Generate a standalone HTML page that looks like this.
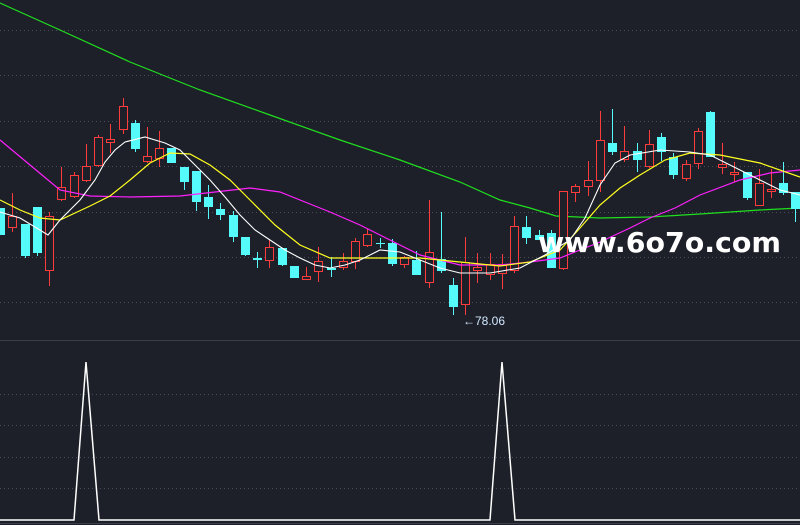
<!DOCTYPE html>
<html><head><style>
html,body{margin:0;padding:0;background:#1e2029;width:800px;height:525px;overflow:hidden}
svg{display:block}
</style></head><body>
<svg width="800" height="525" viewBox="0 0 800 525" xmlns="http://www.w3.org/2000/svg">
<rect width="800" height="525" fill="#1e2029"/>
<g stroke="#4a4e5a" stroke-width="1" stroke-dasharray="1,3">
<line x1="0" y1="30.5" x2="800" y2="30.5"/>
<line x1="0" y1="75.5" x2="800" y2="75.5"/>
<line x1="0" y1="121.5" x2="800" y2="121.5"/>
<line x1="0" y1="166.5" x2="800" y2="166.5"/>
<line x1="0" y1="212.5" x2="800" y2="212.5"/>
<line x1="0" y1="257.5" x2="800" y2="257.5"/>
<line x1="0" y1="302.5" x2="800" y2="302.5"/>
<line x1="0" y1="394.5" x2="800" y2="394.5"/>
<line x1="0" y1="425.5" x2="800" y2="425.5"/>
<line x1="0" y1="457.5" x2="800" y2="457.5"/>
<line x1="0" y1="488.5" x2="800" y2="488.5"/>
</g>
<line x1="0" y1="340.5" x2="800" y2="340.5" stroke="#3a3e4a"/>
<line x1="0" y1="523.5" x2="800" y2="523.5" stroke="#3a3e4a"/>
<polyline fill="none" stroke="#1ee01e" stroke-width="1.2" points="0,3 60,30 130,62 200,90 270,115 340,140 400,160 460,182 500,200 530,208 556,216 600,218 650,217 700,214 760,210 800,208"/>
<g stroke="#ff3c3c" stroke-width="1">
<path d="M12.5 193V232M49.5 212V286M61.5 167V201M74.5 172V198M86.5 144V182M98.5 135V167M110.5 124V153M123.5 98V134M147.5 127V163M159.5 131V167M269.5 240V268M306.5 267V280M318.5 247V282M343.5 253V270M355.5 238V269M367.5 229V247M404.5 256V268M429.5 200V288M465.5 237V315M477.5 253V283M490.5 253V280M502.5 254V289M514.5 216V273M563.5 191V270M575.5 184V202M588.5 161V196M600.5 111V192M624.5 126V162M649.5 130V168M686.5 160V181M698.5 128V169M722.5 143V174M734.5 162V182M759.5 169V206M771.5 169V198"/>
</g>
<g fill="#1e2029" stroke="#ff3c3c" stroke-width="1">
<rect x="8.5" y="216.5" width="8" height="11"/>
<rect x="45.5" y="216.5" width="8" height="54"/>
<rect x="57.5" y="187.5" width="8" height="12"/>
<rect x="70.5" y="175.5" width="8" height="21"/>
<rect x="82.5" y="166.5" width="8" height="14"/>
<rect x="94.5" y="137.5" width="8" height="28"/>
<rect x="106.5" y="139.5" width="8" height="3"/>
<rect x="119.5" y="106.5" width="8" height="23"/>
<rect x="143.5" y="156.5" width="8" height="5"/>
<rect x="155.5" y="148.5" width="8" height="10"/>
<rect x="265.5" y="247.5" width="8" height="13"/>
<rect x="302.5" y="276.5" width="8" height="3"/>
<rect x="314.5" y="261.5" width="8" height="10"/>
<rect x="339.5" y="261.5" width="8" height="6"/>
<rect x="351.5" y="241.5" width="8" height="20"/>
<rect x="363.5" y="234.5" width="8" height="11"/>
<rect x="400.5" y="257.5" width="8" height="7"/>
<rect x="425.5" y="252.5" width="8" height="30"/>
<rect x="461.5" y="262.5" width="8" height="42"/>
<rect x="473.5" y="267.5" width="8" height="3"/>
<rect x="486.5" y="264.5" width="8" height="10"/>
<rect x="498.5" y="264.5" width="8" height="9"/>
<rect x="510.5" y="226.5" width="8" height="44"/>
<rect x="559.5" y="191.5" width="8" height="77"/>
<rect x="571.5" y="186.5" width="8" height="6"/>
<rect x="584.5" y="180.5" width="8" height="6"/>
<rect x="596.5" y="140.5" width="8" height="40"/>
<rect x="620.5" y="151.5" width="8" height="8"/>
<rect x="645.5" y="144.5" width="8" height="22"/>
<rect x="682.5" y="164.5" width="8" height="14"/>
<rect x="694.5" y="131.5" width="8" height="32"/>
<rect x="718.5" y="164.5" width="8" height="3"/>
<rect x="730.5" y="172.5" width="8" height="2"/>
<rect x="755.5" y="183.5" width="8" height="22"/>
<rect x="767.5" y="189.5" width="8" height="2"/>
</g>
<g stroke="#55fafa" stroke-width="1">
<path d="M25.5 224V258M37.5 207V256M135.5 120V152M184.5 167V190M196.5 171V211M208.5 185V219M220.5 203V220M233.5 211V242M245.5 237V256M257.5 252V268M282.5 248V266M294.5 266V278M331.5 257V277M380.5 238V248M392.5 239V266M416.5 251V275M441.5 212V273M453.5 278V315M526.5 216V244M539.5 230V240M551.5 230V268M612.5 109V155M637.5 143V172M661.5 133V161M673.5 153V179M710.5 111V157M747.5 172V200M783.5 162V195M795.5 192V222"/>
</g>
<g fill="#55fafa">
<rect x="0" y="208" width="5" height="27"/>
<rect x="21" y="224" width="9" height="32"/>
<rect x="33" y="207" width="9" height="46"/>
<rect x="131" y="123" width="9" height="26"/>
<rect x="167" y="148" width="9" height="15"/>
<rect x="180" y="167" width="9" height="15"/>
<rect x="192" y="171" width="9" height="31"/>
<rect x="204" y="197" width="9" height="10"/>
<rect x="216" y="209" width="9" height="6"/>
<rect x="229" y="215" width="9" height="22"/>
<rect x="241" y="237" width="9" height="18"/>
<rect x="253" y="258" width="9" height="2"/>
<rect x="278" y="248" width="9" height="17"/>
<rect x="290" y="266" width="9" height="12"/>
<rect x="327" y="268" width="9" height="2"/>
<rect x="376" y="243" width="9" height="1"/>
<rect x="388" y="243" width="9" height="21"/>
<rect x="412" y="260" width="9" height="15"/>
<rect x="437" y="259" width="9" height="12"/>
<rect x="449" y="285" width="9" height="22"/>
<rect x="522" y="227" width="9" height="11"/>
<rect x="535" y="235" width="9" height="5"/>
<rect x="547" y="233" width="9" height="35"/>
<rect x="608" y="143" width="9" height="9"/>
<rect x="633" y="151" width="9" height="9"/>
<rect x="657" y="137" width="9" height="15"/>
<rect x="669" y="157" width="9" height="18"/>
<rect x="706" y="112" width="9" height="45"/>
<rect x="743" y="172" width="9" height="26"/>
<rect x="779" y="183" width="9" height="10"/>
<rect x="791" y="192" width="9" height="17"/>
</g>
<polyline fill="none" stroke="#ff20ff" stroke-width="1.2" points="0,140 30,165 60,190 90,196 130,197 180,196 250,188 280,192 300,200 330,212 360,225 390,240 420,255 460,265 500,265 530,262 560,258 580,250 600,242 630,228 650,218 675,208 700,195 740,180 770,173 800,170"/>
<polyline fill="none" stroke="#ffff20" stroke-width="1.2" points="0,200 20,210 40,218 60,220 90,206 110,196 130,180 150,163 170,153 190,154 210,165 230,180 250,200 275,225 300,245 330,258 360,258 390,258 420,258 460,262 500,266 530,262 560,250 580,228 600,205 620,188 640,175 665,160 690,153 720,155 760,163 800,177"/>
<polyline fill="none" stroke="#ffffff" stroke-width="1.1" points="0,212 20,218 35,227 48,235 60,220 80,200 95,180 105,162 115,150 125,142 145,137 165,143 180,150 195,165 210,180 225,197 240,215 255,230 270,240 285,250 300,258 315,265 330,268 345,265 360,260 380,250 400,252 420,260 440,268 460,273 490,273 520,268 545,255 570,240 585,218 600,185 615,163 630,155 660,150 690,152 710,155 740,170 760,180 780,190 800,195"/>
<text x="463" y="325" font-family="Liberation Sans, sans-serif" font-size="12" fill="#d0e8ff">←78.06</text>
<text x="538" y="252" font-family="DejaVu Sans, Liberation Sans, sans-serif" font-weight="bold" font-size="28" fill="#ffffff" textLength="243" lengthAdjust="spacingAndGlyphs">www.6o7o.com</text>
<polyline fill="none" stroke="#ffffff" stroke-width="1.5" points="0,520 74,520 86,362 99,520 490,520 502,362 515,520 800,520"/>
</svg>
</body></html>
